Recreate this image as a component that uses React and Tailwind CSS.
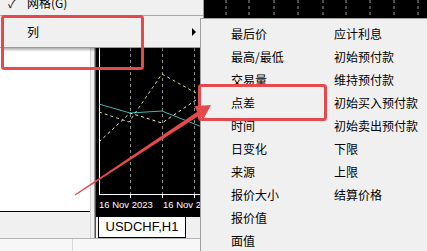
import React from "react";

const cjk = { fontFamily: '"Microsoft YaHei","Noto Sans CJK SC","Noto Sans",sans-serif' };

const col1 = ["最后价", "最高/最低", "交易量", "点差", "时间", "日变化", "来源", "报价大小", "报价值", "面值"];
const col2 = ["应计利息", "初始预付款", "维持预付款", "初始买入预付款", "初始卖出预付款", "下限", "上限", "结算价格"];

function Chart() {
  const topDash = [226, 249, 274, 298, 323, 346, 370, 394, 418];
  const botDash = [130, 162, 194];
  return (
    <svg width="331" height="217" viewBox="96 0 331 217" className="block">
      <rect x="96" y="0" width="331" height="217" fill="#000" />
      {topDash.map((x) => (
        <line key={"t" + x} x1={x} y1="0" x2={x} y2="18" stroke="#9a9a9a" strokeWidth="1" strokeDasharray="3 3" />
      ))}
      {botDash.map((x) => (
        <line key={"b" + x} x1={x + 0.5} y1="0" x2={x + 0.5} y2="194" stroke="#8a8a8a" strokeWidth="1" strokeDasharray="3 3" />
      ))}
      <line x1="99.5" y1="0" x2="99.5" y2="194" stroke="#fff" strokeWidth="1" />
      <line x1="99" y1="194.5" x2="427" y2="194.5" stroke="#fff" strokeWidth="1" />
      {botDash.map((x) => (
        <line key={"k" + x} x1={x + 0.5} y1="194" x2={x + 0.5} y2="198" stroke="#fff" strokeWidth="1" />
      ))}
      <polyline points="99,104 130,113 162,111 202,127" fill="none" stroke="#3fb6b0" strokeWidth="1" />
      <polyline points="99,112 129,122 162,74 196,93" fill="none" stroke="#c8e07a" strokeWidth="1" strokeDasharray="3 3" />
      <polyline points="99,142 130,113 162,123 196,100" fill="none" stroke="#e8e8e8" strokeWidth="1" strokeDasharray="3 3" />
      <text x="99" y="208" fill="#fff" fontSize="9.5" fontFamily="'Liberation Sans', Arial, sans-serif">16 Nov 2023</text>
      <text x="163" y="208" fill="#fff" fontSize="9.5" fontFamily="'Liberation Sans', Arial, sans-serif">16 Nov 2023</text>
    </svg>
  );
}

function Annotations() {
  return (
    <svg width="427" height="251" className="absolute left-0 top-0 pointer-events-none">
      <rect x="2.5" y="16.5" width="140" height="52" rx="2" fill="none" stroke="#e5484d" strokeWidth="3" />
      <rect x="199.5" y="85.5" width="126" height="34" rx="2" fill="none" stroke="#e5484d" strokeWidth="3" />
      <polygon
        points="74.7,194.6 197.3,111.8 194.2,106.3 211,105 203.2,119.5 200.1,115.0 75.3,195.4"
        fill="#e5484d"
      />
    </svg>
  );
}

export default function App() {
  return (
    <div className="relative w-[427px] h-[251px] overflow-hidden bg-[#f0f0f0]" style={cjk}>
      {/* base window */}
      <div className="flex h-[238px]">
        <div className="w-[91px] flex flex-col border-r border-[#d4d4d4]">
          <div className="h-[212px] bg-white border-b border-black" />
          <div className="flex-1 bg-[#f0f0f0]" />
        </div>
        <div className="w-[5px] flex">
          <div className="w-[3px] bg-[#f0f0f0]" />
          <div className="w-[1px] bg-[#a0a0a0]" />
          <div className="w-[1px] bg-[#505050]" />
        </div>
        <div className="flex-1 flex flex-col">
          <div className="h-[217px]">
            <Chart />
          </div>
          <div className="flex-1 flex bg-[#f0f0f0]">
            <div className="ml-[2px] w-[88px] h-[21px] bg-white border-x border-b border-black flex items-center justify-center text-[13px] text-black" style={{ fontFamily: 'Tahoma,"Liberation Sans",sans-serif' }}>
              USDCHF,H1
            </div>
          </div>
        </div>
      </div>
      <div className="h-[13px] border-t border-[#b4b4b4] bg-[#f7f7f7] flex">
        <div className="w-[73px] border-r border-[#d8d8d8]" />
      </div>

      {/* first menu */}
      <div className="absolute left-0 top-[-9px] w-[204px] bg-[#f0f0f0] border-r border-b border-[#9a9a9a] shadow-[2px_2px_2px_rgba(0,0,0,0.3)] text-[12px] text-black">
        <div className="h-[24px] flex items-center relative">
          <span className="absolute left-[8px] text-[11px]">✓</span>
          <span className="ml-[27px]">网格(G)</span>
        </div>
        <div className="h-[1px] bg-[#a8a8a8]" />
        <div className="h-[31px] flex items-center justify-between">
          <span className="ml-[27px]">列</span>
          <span className="mr-[7px] w-0 h-0 border-y-[4px] border-y-transparent border-l-[4px] border-l-black" />
        </div>
      </div>

      {/* submenu */}
      <div className="absolute left-[200px] top-[18px] w-[240px] h-[240px] bg-[#f0f0f0] border-l border-t border-[#a0a0a0] text-[12px] text-black pt-[3px]">
        <div className="flex">
          <div className="w-[133px] pl-[30px] flex flex-col">
            {col1.map((t) => (
              <div key={t} className="h-[23px] flex items-center whitespace-nowrap">{t}</div>
            ))}
          </div>
          <div className="flex flex-col">
            {col2.map((t) => (
              <div key={t} className="h-[23px] flex items-center whitespace-nowrap">{t}</div>
            ))}
          </div>
        </div>
      </div>

      <Annotations />
    </div>
  );
}
